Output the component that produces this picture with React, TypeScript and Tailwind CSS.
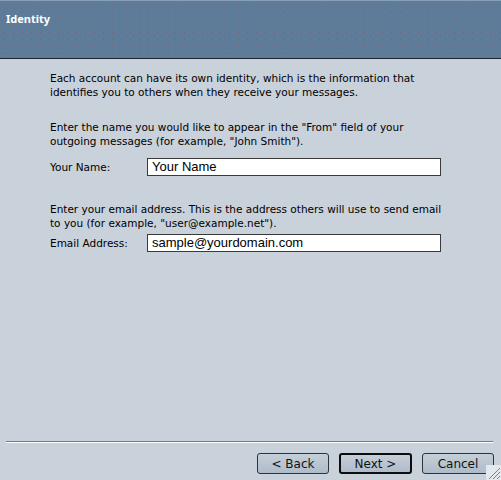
import React from "react";

function Grip() {
  return (
    <svg width="15" height="15" viewBox="0 0 15 15" className="absolute right-0 bottom-0">
      <rect x="0" y="0" width="15" height="15" fill="#e4e8ec" />
      <line x1="14" y1="3" x2="3" y2="14" stroke="#7b848d" strokeWidth="1" />
      <line x1="14" y1="7" x2="7" y2="14" stroke="#7b848d" strokeWidth="1" />
      <line x1="14" y1="11" x2="11" y2="14" stroke="#7b848d" strokeWidth="1" />
    </svg>
  );
}

export default function App() {
  const txt = "font-['DejaVu_Sans',sans-serif] text-[10.5px] leading-[14px] text-black";
  const btn =
    "w-[72px] h-[21px] rounded-[3px] bg-gradient-to-b from-[#c5cfd9] to-[#aebbc9] font-['DejaVu_Sans',sans-serif] text-[12px] text-[#111] leading-none";
  return (
    <div className="w-[501px] h-[480px] flex flex-col bg-[#c9d1da] relative overflow-hidden">
      <div className="h-[59px] shrink-0 bg-[#5e7c99] border-t border-t-[#88a0b7] border-b border-b-[#1c2329] bg-[radial-gradient(circle,#6d6677_0.55px,transparent_0.8px),radial-gradient(circle,#6a7286_0.5px,transparent_0.75px)] bg-[length:9px_7px,7px_9px] bg-[position:0_0,4px_3px] flex items-start pt-[11px] pl-[6px]">
        <span className="font-['Noto_Sans',sans-serif] font-bold text-[11px] leading-[14px] text-white">Identity</span>
      </div>
      <div className="flex-1 flex flex-col pl-[50px] pt-[12px]">
        <p className={txt}>
          Each account can have its own identity, which is the information that
          <br />
          identifies you to others when they receive your messages.
        </p>
        <p className={txt + " mt-[21px]"}>
          Enter the name you would like to appear in the "From" field of your
          <br />
          outgoing messages (for example, "John Smith").
        </p>
        <div className="flex items-center mt-[10px]">
          <span className={txt + " w-[97px]"}>Your Name:</span>
          <div className="w-[294px] h-[18px] bg-white border border-[#3a3a3a] flex items-center pl-[4px] font-['Liberation_Sans',sans-serif] text-[13px] text-black">
            Your Name
          </div>
        </div>
        <p className={txt + " mt-[26px]"}>
          Enter your email address. This is the address others will use to send email
          <br />
          to you (for example, "user@example.net").
        </p>
        <div className="flex items-center mt-[4px]">
          <span className={txt + " w-[97px]"}>Email Address:</span>
          <div className="w-[294px] h-[18px] bg-white border border-[#3a3a3a] flex items-center pl-[4px] font-['Liberation_Sans',sans-serif] text-[13px] text-black">
            sample@yourdomain.com
          </div>
        </div>
      </div>
      <div className="shrink-0 ml-[6px] mr-[8px] border-t border-t-[#6f7a85] border-b border-b-white" />
      <div className="h-[37px] shrink-0 flex justify-end items-start pt-[10px] pr-[7px] gap-[10px]">
        <button className={btn + " border border-[#2e3338]"}>&lt; Back</button>
        <button className={btn + " w-[73px] border-2 border-[#0d0d0d]"}>Next &gt;</button>
        <button className={btn + " border border-[#2e3338]"}>Cancel</button>
      </div>
      <Grip />
    </div>
  );
}
